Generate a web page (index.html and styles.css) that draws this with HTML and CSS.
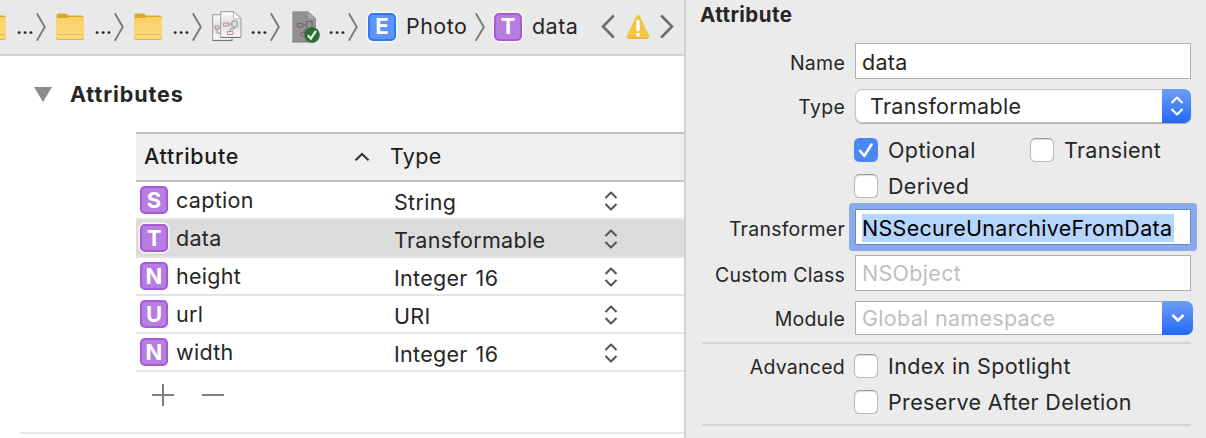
FILE: index.html
```html
<!DOCTYPE html>
<html lang="en">
<head>
<meta charset="utf-8">
<title>Data model editor</title>
<link rel="stylesheet" href="styles.css">
</head>
<body>
<svg class="defs" width="0" height="0" aria-hidden="true">
  <defs>
    <linearGradient id="fold" x1="0" y1="0" x2="0" y2="1"><stop offset="0" stop-color="#f8d067"/><stop offset="1" stop-color="#fcdb7c"/></linearGradient>
    <linearGradient id="paper" x1="0" y1="0" x2="0" y2="1"><stop offset="0" stop-color="#fdfdfd"/><stop offset=".5" stop-color="#dedede"/><stop offset="1" stop-color="#fafafa"/></linearGradient>
    <symbol id="folder" viewBox="0 0 28 28">
      <path d="M.5 6V2.2Q.5.6 2 .6H9Q10.300.6 11.200 1.700L12 2.400H26Q27.500 2.400 27.500 4V8H.5Z" fill="#dca72f"/>
      <path d="M0 6.500Q0 5 1.500 5H11L13 4H26.500Q28 4 28 5.500V24.500Q28 26.300 26.200 26.300H1.800Q0 26.300 0 24.500Z" fill="url(#fold)"/>
      <path d="M.5 21.500H27.500" stroke="#e9bd50" stroke-width="1"/>
      <path d="M0 24.500Q0 26.400 1.800 26.400H26.200Q28 26.400 28 24.500" fill="none" stroke="#dca943" stroke-width="1"/>
    </symbol>
    <symbol id="chev" viewBox="0 0 10 28"><path d="M.8.3 8.800 14 .8 27.700" fill="none" stroke="#797979" stroke-width="1.900"/></symbol>
    <symbol id="updown" viewBox="0 0 14 20"><path d="M1.500 7 7 1.500 12.500 7M1.500 13 7 18.500 12.500 13" fill="none" stroke="currentColor" stroke-width="2.100" stroke-linejoin="round"/></symbol>
  </defs>
</svg>
<div class="window">
  <main class="editor">
    <nav class="jumpbar">
      <div class="crumb"><svg class="ic"><use href="#folder"/></svg><span class="dots">...</span><svg class="chev"><use href="#chev"/></svg></div>
      <div class="crumb"><svg class="ic"><use href="#folder"/></svg><span class="dots">...</span><svg class="chev"><use href="#chev"/></svg></div>
      <div class="crumb"><svg class="ic"><use href="#folder"/></svg><span class="dots">...</span><svg class="chev"><use href="#chev"/></svg></div>
      <div class="crumb">
        <svg class="ic doc" viewBox="0 0 30 32">
          <path d="M.7 3.700H20V29.300H.7Z" fill="url(#paper)" stroke="#999" stroke-width="1"/>
          <path d="M.5 29.500H20.500" stroke="#777"/>
          <path d="M3 15H7V18H3ZM5 18V22H9" fill="none" stroke="#a88a94"/>
          <path d="M8.700.7H22L29 7.500V26.300H8.700Z" fill="url(#paper)" stroke="#999" stroke-width="1"/>
          <path d="M8.500 26.500H29" stroke="#777"/>
          <path d="M21.500.7V7.700H29Z" fill="#fff" stroke="#aaa" stroke-width=".8"/>
          <path d="M11.500 12H16.500V15H11.500ZM15.500 20.500H21V23.500H15.500Z" fill="none" stroke="#cf888e"/>
          <path d="M20 10H25V16H20ZM16.500 13H20M22 16V18H18V20.500" fill="none" stroke="#8c92ab"/>
        </svg><span class="dots">...</span><svg class="chev"><use href="#chev"/></svg></div>
      <div class="crumb">
        <svg class="ic doc" viewBox="0 0 30 32">
          <path d="M2.300.300H18L26 7.500V31H2.300Z" fill="#919191"/>
          <path d="M2.300 31H25" stroke="#777"/>
          <path d="M17.500.5V8H26Z" fill="#aaa" stroke="#858585" stroke-width=".6"/>
          <path d="M7.500 12.500H13V16H7.500ZM11 21.500H16.500V25H11Z" fill="none" stroke="#835f64"/>
          <path d="M16.500 10.500H22V17H16.500ZM13 14H16.500M19 17V19H14V21.500" fill="none" stroke="#62677e"/>
          <circle cx="22" cy="24" r="7.800" fill="#2b6d35"/>
          <path d="M17.800 24.300 20.800 27.600 26 19.800" fill="none" stroke="#e4eee5" stroke-width="2.300"/>
        </svg><span class="dots">...</span><svg class="chev"><use href="#chev"/></svg></div>
      <div class="crumb entity"><span class="badge blue ringed">E</span><span class="crumb-name">Photo</span><svg class="chev"><use href="#chev"/></svg></div>
      <div class="crumb attr"><span class="badge ringed">T</span><span class="crumb-name">data</span></div>
      <div class="issues">
        <svg width="14" height="26" viewBox="0 0 14 26"><path d="M12.800 1.500 2 12.500 12.800 23.500" fill="none" stroke="#6e6e6e" stroke-width="2.600"/></svg>
        <svg width="24" height="26" viewBox="0 0 24 26"><path d="M10.300 2Q12 .2 13.700 2L23.300 22Q24 24.500 21.800 24.500H2.200Q0 24.500 .7 22Z" fill="#f4c445"/><path d="M2 24.200H22" stroke="#dda633" stroke-width="1"/><path d="M12 7.500V15.800" stroke="#fff" stroke-width="3.400" stroke-linecap="round"/><circle cx="12" cy="20.700" r="1.900" fill="#fff"/></svg>
        <svg width="14" height="26" viewBox="0 0 14 26"><path d="M1.200 1.500 12 12.500 1.200 23.500" fill="none" stroke="#6e6e6e" stroke-width="2.600"/></svg>
      </div>
    </nav>
    <section class="attributes">
      <h2 class="section-title"><svg width="18" height="15" viewBox="0 0 18 15"><path d="M0 0H18L9 15Z" fill="#8c8c8c"/></svg><span>Attributes</span></h2>
      <div class="table">
        <div class="row head"><span class="col-name">Attribute</span><svg class="sort" viewBox="0 0 16 10"><path d="M1.500 8.300 8 2 14.500 8.300" fill="none" stroke="#333" stroke-width="2.100"/></svg><span class="col-type">Type</span></div>
        <div class="row"><span class="badge">S</span><span class="name">caption</span><span class="type">String</span><svg class="step"><use href="#updown"/></svg></div>
        <div class="row selected"><span class="badge ringed">T</span><span class="name">data</span><span class="type">Transformable</span><svg class="step"><use href="#updown"/></svg></div>
        <div class="row"><span class="badge">N</span><span class="name">height</span><span class="type">Integer 16</span><svg class="step"><use href="#updown"/></svg></div>
        <div class="row"><span class="badge">U</span><span class="name">url</span><span class="type">URI</span><svg class="step"><use href="#updown"/></svg></div>
        <div class="row"><span class="badge">N</span><span class="name">width</span><span class="type">Integer 16</span><svg class="step"><use href="#updown"/></svg></div>
      </div>
      <div class="table-actions">
        <svg width="22" height="22"><path d="M0 11H22M11 0V22" stroke="#7f7f7f" stroke-width="2"/></svg>
        <svg width="22" height="22"><path d="M0 11H22" stroke="#7f7f7f" stroke-width="2"/></svg>
      </div>
    </section>
  </main>
  <aside class="inspector">
    <h2 class="inspector-title">Attribute</h2>
    <div class="form main-form">
      <div class="field f-name"><label>Name</label><div class="input">data</div></div>
      <div class="field f-type"><label>Type</label><div class="select"><span>Transformable</span><i class="cap"><svg class="step"><use href="#updown"/></svg></i></div></div>
      <div class="field check-row"><label></label><span class="check on"><svg viewBox="0 0 24 24"><path d="M6 12.800 10.300 18 17.500 6.500" fill="none" stroke="#fff" stroke-width="2.500" stroke-linecap="round" stroke-linejoin="round"/></svg></span><span class="check-label optional">Optional</span><span class="check"></span><span class="check-label">Transient</span></div>
      <div class="field check-row"><label></label><span class="check"></span><span class="check-label">Derived</span></div>
      <div class="field f-transformer"><label>Transformer</label><div class="input focused"><mark>NSSecureUnarchiveFromData</mark></div></div>
      <div class="field f-class"><label>Custom Class</label><div class="input placeholder">NSObject</div></div>
      <div class="field f-module"><label>Module</label><div class="input combo placeholder"><span>Global namespace</span></div><i class="cap combo-cap"><svg width="16" height="10" viewBox="0 0 16 10"><path d="M2.500 2 8 7.500 13.500 2" fill="none" stroke="#fff" stroke-width="2.600"/></svg></i></div>
    </div>
    <div class="form advanced">
      <div class="field check-row"><label>Advanced</label><span class="check"></span><span class="check-label spotlight">Index in Spotlight</span></div>
      <div class="field check-row"><label></label><span class="check"></span><span class="check-label preserve">Preserve After Deletion</span></div>
    </div>
  </aside>
</div>
</body>
</html>
```
FILE: styles.css
```css
* { box-sizing: border-box; }
body {
  margin: 0;
  width: 1206px;
  height: 438px;
  overflow: hidden;
  font: 21.5px/26px Inter, "Liberation Sans", sans-serif;
  letter-spacing: 0.3px;
  color: #262626;
  white-space: nowrap;
}
svg { display: block; flex: none; }
.defs { position: absolute; }
h2 { margin: 0; font-size: 21.5px; line-height: 26px; font-weight: 700; }
.window { display: flex; height: 438px; }
.editor { width: 686px; flex: none; border-right: 2px solid #d0d0d0; background: #fff; overflow: hidden; }

/* Jump bar */
.jumpbar { display: flex; align-items: center; height: 56px; padding-bottom: 1px; background: #e9e9e9; border-bottom: 2px solid #d0d0d0; }
.crumb { display: flex; align-items: center; width: 78px; height: 53px; flex: none; }
.crumb:first-child { margin-left: -22px; }
.ic { width: 28px; height: 28px; }
.ic.doc { width: 30px; height: 32px; margin-right: -2px; }
.dots { width: 30px; padding: 0 0 2px 10px; letter-spacing: -0.3px; }
.chev { width: 10px; height: 28px; }
.crumb-name { padding: 0 0 1px 10px; letter-spacing: 0.45px; }
.crumb.entity { width: 126px; }
.crumb.entity .crumb-name { width: 79px; }
.crumb.attr { width: 107px; }
.issues { display: flex; align-items: center; gap: 10.500px; }

.badge {
  width: 28px; height: 28px; flex: none;
  border: 2px solid #a45bd5; border-radius: 5px;
  background: #b77de0; color: #fff;
  font-size: 22px; line-height: 24px; font-weight: 700; text-align: center; letter-spacing: 0;
}
.badge.blue { background: #5c96f8; border-color: #2f79f7; }
.badge.ringed { box-shadow: 0 0 0 1.500px #f8f8f8; }
.jumpbar .badge { line-height: 23px; }

/* Attribute table */
.section-title { display: flex; align-items: center; gap: 18px; padding: 25px 0 0 34px; height: 51px; letter-spacing: 0.9px; }
.table { margin: 25px 0 0 136px; border-top: 2px solid #c1c1c1; }
.row { display: flex; align-items: center; height: 38px; padding-left: 4px; border-bottom: 2px solid #e4e4e4; }
.row.head { height: 48px; padding-left: 8px; background: #efefef; border-bottom-color: #c1c1c1; color: #1c1c1c; }
.col-name, .col-type { padding-bottom: 2px; }
.col-name { width: 210px; font-weight: 500; letter-spacing: 0.7px; }
.sort { width: 16px; height: 10px; margin-right: 20px; }
.row.selected { background: #dcdcdc; }
.name { width: 226px; padding-left: 8px; }
.type { width: 210px; padding-top: 3px; word-spacing: 1.5px; }
.step { width: 14px; height: 20px; color: #555; }
.row .step { margin-top: 2px; }
.table-actions { display: flex; gap: 28px; height: 62px; margin-left: 152px; padding: 12px 0 26px; }
.attributes { position: relative; }
.table-actions::after { content: ""; position: absolute; left: 20px; right: 0; bottom: 0; height: 2px; background: #e5e5e5; }

/* Inspector */
.inspector { flex: 1; background: #ebebeb; padding-left: 14px; }
.inspector-title { padding-top: 2px; height: 43px; font-size: 20.500px; letter-spacing: 0.45px; }
.form { display: flex; flex-direction: column; }
.field { display: flex; align-items: center; }
.field label { width: 145px; margin-right: 10px; padding-top: 2px; text-align: right; font-size: 19.500px; letter-spacing: 0.25px; }
.f-name label, .f-transformer label, .f-class label { padding-top: 4px; }
.input { width: 336px; height: 36px; padding: 0 6px; line-height: 35px; border: 1px solid #b1b1b1; background: #fff; }
.f-name { height: 36px; }
.f-name .input { line-height: 37px; }
.f-type { height: 34px; margin-top: 10px; }
.select { display: flex; align-items: center; width: 336px; height: 34px; padding-left: 15px; border-radius: 7px; overflow: hidden; background: #fff; box-shadow: inset 0 0 0 1px #c5c5c5, 0 1px 1px #aaa; }
.select span { flex: 1; }
.cap { display: flex; align-items: center; justify-content: center; width: 29px; height: 34px; background: linear-gradient(#6da0f4, #2467f6); }
.cap .step { color: #fff; }
.check-row { height: 36px; }
.f-type + .check-row { margin-top: 9px; }
.check { width: 24px; height: 24px; margin-left: -1px; flex: none; border: 1px solid #b9b9b9; border-top-color: #999; border-radius: 5.500px; background: #fff; box-shadow: inset 0 1px 1px #ddd; }
.check.on { border: 0; background: #4b87f5; box-shadow: none; }
.check-label { padding-left: 10px; }
.optional { width: 153px; letter-spacing: 0.4px; }
.spotlight { letter-spacing: 0.4px; }
.preserve { letter-spacing: 0.35px; }
.f-transformer { height: 36px; margin-top: 5px; }
.input.focused { display: flex; padding-top: 4px; border-color: #6589cf; box-shadow: 0 0 0 6px #8aaaea; border-radius: 1px; color: #000; }
mark { height: 28px; line-height: 28px; width: 312px; background: #b6d5fc; color: inherit; }
.f-class { height: 36px; margin-top: 10px; }
.placeholder { color: #bfbfbf; }
.f-module { height: 34px; margin-top: 10px; }
.combo { width: 307px; height: 34px; line-height: 33px; border-right: 0; }
.combo-cap { width: 31px; border-radius: 0 7px 7px 0; }
.advanced { margin: 7px 15px 0 2px; padding: 4px 0; height: 84px; border-top: 2px solid #d3d3d3; border-bottom: 2px solid #d3d3d3; }
.advanced .field label { width: 143px; }
```
